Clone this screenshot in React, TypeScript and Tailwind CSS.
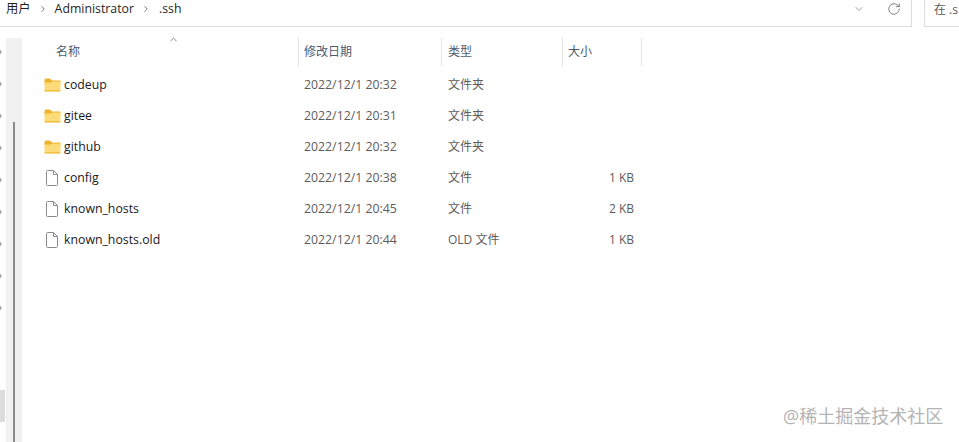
import { ChevronDown, ChevronRight, ChevronUp, RotateCw } from "lucide-react";

const files = [
  { name: "codeup", date: "2022/12/1 20:32", type: "文件夹", size: "", folder: true },
  { name: "gitee", date: "2022/12/1 20:31", type: "文件夹", size: "", folder: true },
  { name: "github", date: "2022/12/1 20:32", type: "文件夹", size: "", folder: true },
  { name: "config", date: "2022/12/1 20:38", type: "文件", size: "1 KB", folder: false },
  { name: "known_hosts", date: "2022/12/1 20:45", type: "文件", size: "2 KB", folder: false },
  { name: "known_hosts.old", date: "2022/12/1 20:44", type: "OLD 文件", size: "1 KB", folder: false },
];

function FolderIcon() {
  return (
    <svg width="17" height="14" viewBox="0 0 17 14" className="shrink-0">
      <path d="M0.5 2 Q0.5 0.5 2 0.5 H6 L8 2.5 H16.5 V6 H0.5 Z" fill="#eeb32b" />
      <path d="M0.5 4.5 H7 L8.5 3.5 H16 Q16.5 3.5 16.5 4 V12.5 Q16.5 13.5 15.5 13.5 H1.5 Q0.5 13.5 0.5 12.5 Z" fill="#fbdc78" />
      <path d="M0.5 12 H16.5 V12.5 Q16.5 13.5 15.5 13.5 H1.5 Q0.5 13.5 0.5 12.5 Z" fill="#f0c24a" />
    </svg>
  );
}

function FileIcon() {
  return (
    <svg width="12" height="16" viewBox="0 0 12 16" fill="none" className="shrink-0">
      <path d="M0.5 1.5 Q0.5 0.5 1.5 0.5 H7.5 L11.5 4.5 V14.5 Q11.5 15.5 10.5 15.5 H1.5 Q0.5 15.5 0.5 14.5 Z" fill="#fff" stroke="#8c8c8c" />
      <path d="M7.5 0.5 V4.5 H11.5" stroke="#8c8c8c" />
    </svg>
  );
}

export default function App() {
  return (
    <div className="relative flex h-[442px] w-[959px] flex-col overflow-hidden bg-white font-['Open_Sans','Noto_Sans_CJK_SC',sans-serif] text-[12.3px]">
      {/* address bar */}
      <div className="flex h-[27px] shrink-0">
        <div className="flex w-[912px] items-start justify-between border-r border-b border-[#dcdcdc] pr-[10px] pl-[6px]">
          <div className="flex items-center text-[#1f1f1f]">
            <span>用户</span>
            <ChevronRight className="mx-[7px] size-[10px]" strokeWidth={2} color="#666" />
            <span>Administrator</span>
            <ChevronRight className="mx-[7.5px] size-[10px]" strokeWidth={2} color="#666" />
            <span>.ssh</span>
          </div>
          <div className="flex items-center gap-[22px] pt-[2px]">
            <ChevronDown className="size-[12px]" strokeWidth={1.2} color="#555" />
            <RotateCw className="size-[14px]" strokeWidth={1.2} color="#555" />
          </div>
        </div>
        <div className="ml-[12px] flex-1 overflow-hidden border-b border-l border-[#dcdcdc] pt-[1px] pl-[9px] text-[12px] whitespace-nowrap text-[#5c5c5c]">
          在 .s
        </div>
      </div>

      <div className="flex min-h-0 flex-1">
        {/* collapsed nav pane */}
        <div className="flex w-[6px] shrink-0 flex-col">
          <div className="flex flex-col gap-[24px] pt-[21px]">
            {[0, 1, 2, 3, 4, 5, 6, 7, 8].map((i) => (
              <div key={i} className="h-[8px] w-[2px] rounded-r-full bg-[#a8a8a8] [clip-path:polygon(0_20%,100%_50%,0_80%)]" />
            ))}
          </div>
          <div className="mt-[78px] h-[32px] w-[5px] bg-[#dcdcdc]" />
        </div>

        {/* scrollbar */}
        <div className="mt-[11px] flex w-[16px] shrink-0 flex-col items-center bg-[#f1f1f1] pt-[84px]">
          <div className="w-[2px] flex-1 bg-[#8a8a8a]" />
        </div>

        {/* file list */}
        <div className="flex-1">
          <div className="relative mt-[11px] grid h-[28px] grid-cols-[277px_143px_121px_79px] text-[12px] text-[#4c5c70]">
            <div className="flex items-center border-r border-[#e5e5e5] pl-[34px]">名称</div>
            <ChevronUp className="absolute top-[-4px] left-[146px] size-[11px]" strokeWidth={1.5} color="#555" />
            <div className="flex items-center border-r border-[#e5e5e5] pl-[5px]">修改日期</div>
            <div className="flex items-center border-r border-[#e5e5e5] pl-[6px]">类型</div>
            <div className="flex items-center border-r border-[#e5e5e5] pl-[5px]">大小</div>
          </div>
          <div className="mt-[3px]">
            {files.map((file) => (
              <div key={file.name} className="grid h-[31px] grid-cols-[276px_143px_121px_79px] items-center text-[#5c5c5c]">
                <div className="flex items-center pl-[21px] text-[#1a1a1a]">
                  <div className="flex w-[21px] justify-center pr-[3px]">
                    {file.folder ? <FolderIcon /> : <FileIcon />}
                  </div>
                  <span className="pt-[1px]">{file.name}</span>
                </div>
                <div className="pt-[1px] pl-[6px]">{file.date}</div>
                <div className="pl-[7px] text-[12px]">{file.type}</div>
                <div className="pr-[7px] text-right text-[12px]">{file.size}</div>
              </div>
            ))}
          </div>
        </div>
      </div>

      {/* watermark */}
      <div className="absolute top-[403px] left-[783px] text-[18px] whitespace-nowrap text-[#b4b4b4]">@稀土掘金技术社区</div>
    </div>
  );
}
